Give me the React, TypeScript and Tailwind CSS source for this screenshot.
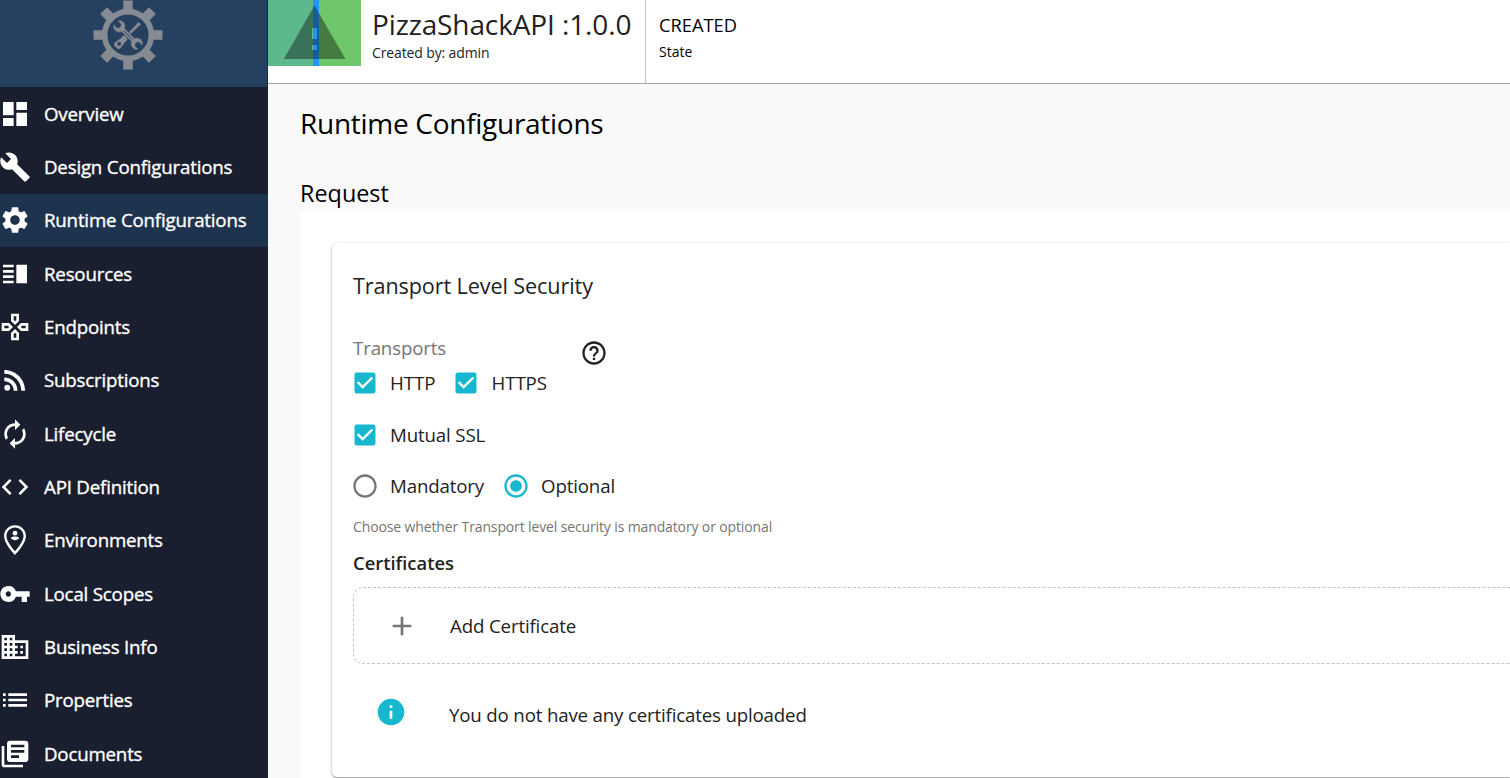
import type { ReactNode } from "react";
import {
  MdAdd,
  MdAutorenew,
  MdBuild,
  MdBusiness,
  MdCheckBox,
  MdCode,
  MdDashboard,
  MdHelpOutline,
  MdInfo,
  MdLibraryBooks,
  MdList,
  MdOutlineGamepad,
  MdRadioButtonChecked,
  MdRadioButtonUnchecked,
  MdRssFeed,
  MdSettings,
  MdVerticalSplit,
  MdVpnKey,
} from "react-icons/md";

function PersonPin({ className }: { className?: string }) {
  return (
    <svg viewBox="0 0 24 24" fill="currentColor" className={className}>
      <path
        fillRule="evenodd"
        d="M12 0.9 C7.4 0.9 3.8 4.5 3.8 9 C3.8 15 12 23.2 12 23.2 S20.2 15 20.2 9 C20.2 4.5 16.6 0.9 12 0.9 Z M12 2.6 C15.6 2.6 18.4 5.4 18.4 9 C18.4 12.8 14.5 17.6 12 20.4 C9.5 17.6 5.6 12.8 5.6 9 C5.6 5.4 8.4 2.6 12 2.6 Z"
      />
      <circle cx="12" cy="6.9" r="1.8" />
      <path d="M8.8 10.5 C9.6 9.6 11 9.3 12 9.3 S14.4 9.6 15.2 10.5 C14.4 11.6 13.2 12.1 12 12.1 S9.6 11.6 8.8 10.5 Z" />
    </svg>
  );
}

const navItems = [
  { label: "Overview", Icon: MdDashboard },
  { label: "Design Configurations", Icon: MdBuild },
  { label: "Runtime Configurations", Icon: MdSettings, active: true },
  { label: "Resources", Icon: MdVerticalSplit },
  { label: "Endpoints", Icon: MdOutlineGamepad },
  { label: "Subscriptions", Icon: MdRssFeed },
  { label: "Lifecycle", Icon: MdAutorenew },
  { label: "API Definition", Icon: MdCode },
  { label: "Environments", Icon: PersonPin },
  { label: "Local Scopes", Icon: MdVpnKey },
  { label: "Business Info", Icon: MdBusiness },
  { label: "Properties", Icon: MdList },
  { label: "Documents", Icon: MdLibraryBooks },
];

function GearLogo() {
  return (
    <svg viewBox="-35 -35 70 70" className="size-[70px]" fill="#868a92">
      {[0, 45, 90, 135, 180, 225, 270, 315].map((angle) => (
        <rect key={angle} x="-4.8" y="-34.5" width="9.6" height="12" transform={`rotate(${angle})`} />
      ))}
      <circle r="23.4" fill="none" stroke="#868a92" strokeWidth="5.6" />
      <g transform="rotate(45)">
        <path d="M-1.4 -12 L-2 -16 Q0 -17.6 2 -16 L1.4 -12 L1.1 4 H-1.1 Z" />
        <path
          fillRule="evenodd"
          d="M-3 4.5 Q-3 3 -1.6 3 H1.6 Q3 3 3 4.5 L2.8 7 L4 14.6 Q4 17.3 0 17.3 Q-4 17.3 -4 14.6 L-2.8 7 Z M0 10.6 a1.9 1.9 0 1 0 0.01 0 Z"
        />
      </g>
      <g transform="rotate(-45)">
        <path
          stroke="#264060"
          strokeWidth="0.6"
          d="M-2.6 -18 A6.1 6.1 0 0 0 -2.4 -6.8 V6.8 A6.1 6.1 0 0 0 -2.6 18 V12.8 L0 11.2 L2.6 12.8 V18 A6.1 6.1 0 0 0 2.4 6.8 V-6.8 A6.1 6.1 0 0 0 2.6 -18 V-12.8 L0 -11.2 L-2.6 -12.8 Z"
        />
        <path d="M0 -6 V6" stroke="#264060" strokeWidth="0.9" />
      </g>
    </svg>
  );
}

function ApiThumbnail() {
  return (
    <svg viewBox="0 0 93 66" className="h-[66px] w-[93px] shrink-0">
      <rect width="46" height="66" fill="#5db88e" />
      <rect x="46" width="47" height="66" fill="#70c66a" />
      <rect x="45" width="6" height="66" fill="#2196f3" />
      <path d="M46.5 5.5 L77.5 59 H15.8 Z" fill="#000" fillOpacity="0.38" />
      <path d="M44 28 h5 v11 h-5 Z M44 45 h5 v5 h-5 Z" fill="#2196f3" />
      <path d="M44 28 h1 v11 h-1 Z M44 45 h1 v5 h-1 Z" fill="#5db88e" />
    </svg>
  );
}

function Option({ icon, children }: { icon: ReactNode; children: ReactNode }) {
  return (
    <div className="flex items-center gap-[11px]">
      {icon}
      <span>{children}</span>
    </div>
  );
}

function Sidebar() {
  return (
    <nav className="w-[268px] shrink-0 bg-[#1a1f2f] text-white">
      <div className="flex h-[87px] justify-center border-r border-[#1a2a44] bg-[#264060] pr-[12px]">
        <div className="-mt-[0.5px]">
          <GearLogo />
        </div>
      </div>
      <ul>
        {navItems.map(({ label, Icon, active }) => (
          <li
            key={label}
            className={`flex h-[53.33px] items-center gap-[13px] text-[18.7px] font-medium tracking-[-0.19px] whitespace-nowrap ${active ? "bg-[#1e344e]" : ""}`}
          >
            <Icon className="-ml-px size-8 shrink-0" />
            <span className="[-webkit-text-stroke:0.35px_#fff]">{label}</span>
          </li>
        ))}
      </ul>
    </nav>
  );
}

function Header() {
  return (
    <header className="flex h-[84px] border-b border-[#a6a6a6] bg-white">
      <ApiThumbnail />
      <div className="w-[285px] shrink-0 border-r border-[#c4c4c4] pt-[4px] pl-[11px] text-[#222] whitespace-nowrap">
        <div className="text-[28px] leading-10 tracking-[-0.12px]">PizzaShackAPI :1.0.0</div>
        <div className="mt-px text-[14px] leading-4 tracking-[-0.13px]">Created by: admin</div>
      </div>
      <div className="pt-[11px] pl-[13px] text-black">
        <div className="text-[18.3px] leading-7">CREATED</div>
        <div className="mt-[3px] text-[14px] leading-5">State</div>
      </div>
    </header>
  );
}

function TransportSecurity() {
  return (
    <section className="h-[534px] rounded-l-[5px] bg-white pt-[25px] pl-[21px] text-[18.7px] tracking-[-0.15px] text-[#222] shadow-[0_1px_3px_rgba(0,0,0,0.35),0_1px_1px_rgba(0,0,0,0.14)]">
      <h3 className="text-[21.6px] leading-9 tracking-[-0.1px]">Transport Level Security</h3>
      <div className="mt-[32px] flex h-[24px] w-[254.5px] justify-between">
        <span className="leading-6 text-[#757575]">Transports</span>
        <MdHelpOutline className="mt-[2.5px] size-7" />
      </div>
      <div className="-ml-[2px] flex h-[46px] items-center gap-[17px]">
        <Option icon={<MdCheckBox className="size-7 text-[#18b7d0]" />}>
          <span className="tracking-[-0.05px]">HTTP</span>
        </Option>
        <Option icon={<MdCheckBox className="size-7 text-[#18b7d0]" />}>
          <span className="tracking-[-0.05px]">HTTPS</span>
        </Option>
      </div>
      <div className="mt-[6px] -ml-[2px] flex h-[46px] items-center">
        <Option icon={<MdCheckBox className="size-7 text-[#18b7d0]" />}>Mutual SSL</Option>
      </div>
      <div className="mt-[5px] -ml-[2px] flex h-[46px] items-center gap-[18px]">
        <Option icon={<MdRadioButtonUnchecked className="size-7 text-[#757575]" />}>Mandatory</Option>
        <Option icon={<MdRadioButtonChecked className="size-7 text-[#18b7d0]" />}>Optional</Option>
      </div>
      <p className="mt-[8px] text-[14px] leading-5 tracking-[-0.13px] text-[#757575]">
        Choose whether Transport level security is mandatory or optional
      </p>
      <h4 className="mt-[12px] text-[18.4px] leading-7 font-semibold tracking-normal">Certificates</h4>
      <div className="mt-[10px] flex h-[77px] items-center gap-[32px] rounded-l-[10px] border border-r-0 border-dashed border-[#c4c4c4] pl-[32px]">
        <MdAdd className="size-8 text-[#757575]" />
        <span className="mt-px">Add Certificate</span>
      </div>
      <div className="mt-[32px] flex h-8 items-center gap-[42.5px] pl-[21.5px]">
        <MdInfo className="size-8 text-[#18b7d0]" />
        <span className="mt-[6px] tracking-[-0.17px]">You do not have any certificates uploaded</span>
      </div>
    </section>
  );
}

export default function App() {
  return (
    <div className="flex h-[778px] w-[1510px] overflow-hidden bg-[#f9f9f9] font-['Open_Sans',sans-serif]">
      <Sidebar />
      <div className="min-w-0 flex-1">
        <Header />
        <main className="pl-[32px] text-black">
          <h1 className="pt-[19px] text-[28px] leading-10 tracking-[-0.28px]">Runtime Configurations</h1>
          <h2 className="mt-[33px] mb-px text-[23.4px] leading-[34px]">Request</h2>
          <div className="h-[567px] rounded-tl-[5px] bg-white pt-[32px] pl-[32px]">
            <TransportSecurity />
          </div>
        </main>
      </div>
    </div>
  );
}
